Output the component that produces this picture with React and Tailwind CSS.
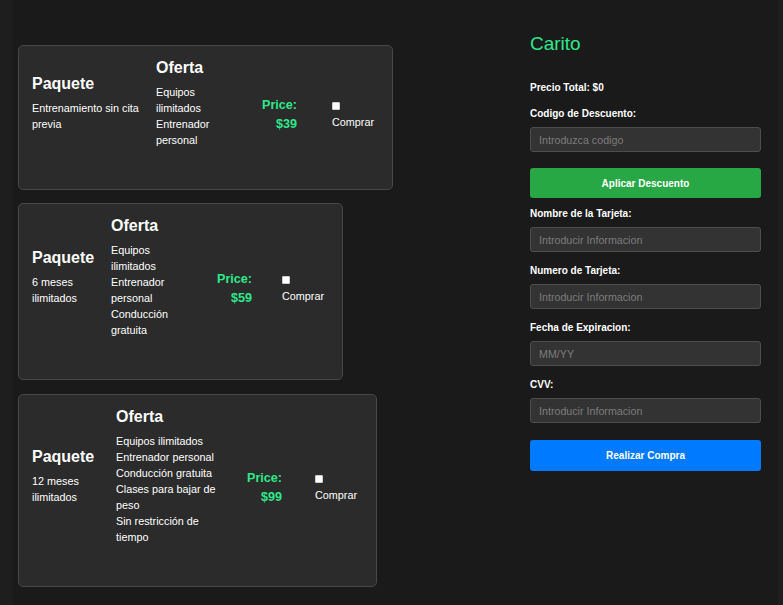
import { useState } from "react";

const packages = [
  {
    id: 1,
    desc: "Entrenamiento sin cita previa",
    items: ["Equipos ilimitados", "Entrenador personal"],
    price: 39,
    card: "w-[375px]",
    paq: "w-[124px]",
    of: "w-[70px]",
    pr: "w-[71px]",
    chk: "ml-[35px]",
  },
  {
    id: 2,
    desc: "6 meses ilimitados",
    items: ["Equipos ilimitados", "Entrenador personal", "Conducción gratuita"],
    price: 59,
    card: "w-[325px] mt-[13px]",
    paq: "w-[79px]",
    of: "w-[72px]",
    pr: "w-[69px]",
    chk: "ml-[30px]",
  },
  {
    id: 3,
    desc: "12 meses ilimitados",
    items: [
      "Equipos ilimitados",
      "Entrenador personal",
      "Conducción gratuita",
      "Clases para bajar de peso",
      "Sin restricción de tiempo",
    ],
    price: 99,
    card: "w-[359px] mt-[14px]",
    paq: "w-[84px]",
    of: "w-[103px]",
    pr: "w-[63px]",
    chk: "ml-[33px]",
  },
];

function PackageCard({ pkg, checked, onToggle }) {
  return (
    <div
      className={`${pkg.card} flex items-center bg-[#2b2b2b] border border-[#474747] rounded-[5px] pl-[13px] pt-[12px] pb-[41px]`}
    >
      {/* Paquete */}
      <div className={`${pkg.paq} shrink-0`}>
        <h3 className="text-[16px] leading-[20px] font-bold text-white">Paquete</h3>
        <p className="mt-[6px] pr-[4px] text-[10.8px] leading-[16px] text-white">{pkg.desc}</p>
      </div>

      {/* Oferta */}
      <div className={`${pkg.of} shrink-0`}>
        <h3 className="text-[16px] leading-[20px] font-bold text-white">Oferta</h3>
        <ul className="mt-[6px] text-[10.8px] leading-[16px] text-white">
          {pkg.items.map((item) => (
            <li key={item}>{item}</li>
          ))}
        </ul>
      </div>

      {/* Price */}
      <div className={`${pkg.pr} shrink-0 mt-[23px] text-right text-[12.6px] leading-[19px] font-bold text-[#2ee88a]`}>
        <div>Price:</div>
        <div>${pkg.price}</div>
      </div>

      {/* Comprar */}
      <label className={`${pkg.chk} shrink-0 mt-[26px] flex flex-col items-start cursor-pointer`}>
        <input
          type="checkbox"
          checked={checked}
          onChange={onToggle}
          className="appearance-none w-[8px] h-[8px] bg-white border border-[#cfcfcf] rounded-[1px] checked:bg-[#2ee88a]"
        />
        <span className="mt-[4px] text-[10.8px] leading-[16px] text-white">Comprar</span>
      </label>
    </div>
  );
}

function Field({ label, placeholder, first }) {
  return (
    <div className={first ? "mt-[9px]" : "mt-[12px]"}>
      <label className="block text-[10px] leading-[14px] font-bold text-white">{label}</label>
      <input
        type="text"
        placeholder={placeholder}
        className="mt-[6px] w-full h-[25px] px-[8px] bg-[#333333] border border-[#4d4d4d] rounded-[3px] text-[10.7px] text-white placeholder:text-[#7c7c7c] outline-none"
      />
    </div>
  );
}

export default function App() {
  const [selected, setSelected] = useState([]);

  const toggle = (id) => {
    setSelected((prev) => (prev.includes(id) ? prev.filter((x) => x !== id) : [...prev, id]));
  };

  const total = packages
    .filter((p) => selected.includes(p.id))
    .reduce((sum, p) => sum + p.price, 0);

  return (
    <div
      className="min-h-screen bg-[#1e1e1e] pl-[13px] pr-[5px]"
      style={{ fontFamily: '"Liberation Sans", Arial, sans-serif' }}
    >
      <div className="min-h-screen bg-[#1a1a1a] flex">
        {/* Packages */}
        <div className="w-[517px] shrink-0 pl-[5px] pt-[45px] pb-[18px] flex flex-col items-start">
          {packages.map((pkg) => (
            <PackageCard
              key={pkg.id}
              pkg={pkg}
              checked={selected.includes(pkg.id)}
              onToggle={() => toggle(pkg.id)}
            />
          ))}
        </div>

        {/* Cart */}
        <div className="w-[231px] shrink-0 pt-[33px]">
          <h2 className="text-[19px] leading-[22px] text-[#2ee88a]">Carito</h2>

          <p className="mt-[26px] text-[10px] leading-[14px] font-bold text-white">Precio Total: ${total}</p>

          <div className="mt-[12px]">
            <label className="block text-[10px] leading-[14px] font-bold text-white">Codigo de Descuento:</label>
            <input
              type="text"
              placeholder="Introduzca codigo"
              className="mt-[6px] w-full h-[25px] px-[8px] bg-[#333333] border border-[#4d4d4d] rounded-[3px] text-[10.7px] text-white placeholder:text-[#7c7c7c] outline-none"
            />
          </div>

          <button className="mt-[16px] w-full h-[30px] bg-[#28a745] rounded-[3px] text-[10px] font-bold text-white">
            Aplicar Descuento
          </button>

          <Field label="Nombre de la Tarjeta:" placeholder="Introducir Informacion" first />
          <Field label="Numero de Tarjeta:" placeholder="Introducir Informacion" />
          <Field label="Fecha de Expiracion:" placeholder="MM/YY" />
          <Field label="CVV:" placeholder="Introducir Informacion" />

          <button className="mt-[17px] w-full h-[31px] bg-[#007bff] rounded-[3px] text-[10px] font-bold text-white">
            Realizar Compra
          </button>
        </div>
      </div>
    </div>
  );
}
